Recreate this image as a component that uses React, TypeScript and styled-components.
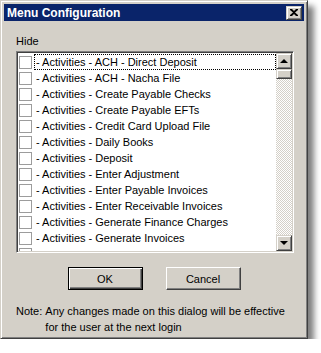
import { createGlobalStyle, styled } from 'styled-components';

const items = [
  '- Activities - ACH - Direct Deposit',
  '- Activities - ACH - Nacha File',
  '- Activities - Create Payable Checks',
  '- Activities - Create Payable EFTs',
  '- Activities - Credit Card Upload File',
  '- Activities - Daily Books',
  '- Activities - Deposit',
  '- Activities - Enter Adjustment',
  '- Activities - Enter Payable Invoices',
  '- Activities - Enter Receivable Invoices',
  '- Activities - Generate Finance Charges',
  '- Activities - Generate Invoices',
  '',
];

const App = () => {
  return (
    <>
      <GlobalStyle />
      <Dialog>
        <TitleBar>
          <Title>Menu Configuration</Title>
          <CloseButton>
            <svg width="8" height="7" viewBox="0 0 8 7">
              <path d="M0 0h2l2 2 2-2h2v1L5 3.5 8 6v1H6L4 5 2 7H0V6l3-2.5L0 1z" fill="#000" />
            </svg>
          </CloseButton>
        </TitleBar>
        <Body>
          <Label>Hide</Label>
          <ListBox>
            <Rows>
              {items.map((item, i) => (
                <Row key={i}>
                  <CheckBox />
                  <ItemText $focused={i === 0}>{item}</ItemText>
                </Row>
              ))}
            </Rows>
            <ScrollBar>
              <ScrollButton>
                <Arrow $up />
              </ScrollButton>
              <Thumb />
              <Track />
              <ScrollButton>
                <Arrow />
              </ScrollButton>
            </ScrollBar>
          </ListBox>
          <ButtonRow>
            <Button $default>OK</Button>
            <Button>Cancel</Button>
          </ButtonRow>
          <Note>
            <span>Note:&nbsp;</span>
            <span>Any changes made on this dialog will be effective for the user at the next login</span>
          </Note>
        </Body>
      </Dialog>
    </>
  );
};

export default App;

const GlobalStyle = createGlobalStyle`
  body {
    margin: 0;
    background: #fff;
    font-family: "Liberation Sans", Arial, sans-serif;
    font-size: 11px;
    color: #000;
  }
`;

const raised = `
  border: 1px solid;
  border-color: #d4d0c8 #404040 #404040 #d4d0c8;
  box-shadow: inset 1px 1px #fff, inset -1px -1px #808080;
`;

const Dialog = styled.div`
  box-sizing: border-box;
  width: 308px;
  height: 339px;
  padding: 3px;
  background: #d4d0c8;
  ${raised}
  box-shadow: inset 1px 1px #fff, inset -1px -1px #808080, 6px 6px 6px rgba(0, 0, 0, 0.5);
  display: flex;
  flex-direction: column;
`;

const TitleBar = styled.div`
  height: 18px;
  background: #0a246a;
  display: flex;
  align-items: center;
  justify-content: space-between;
  padding: 0 2px 0 3px;
`;

const Title = styled.span`
  color: #fff;
  font-weight: bold;
  font-size: 12px;
`;

const CloseButton = styled.div`
  box-sizing: border-box;
  width: 16px;
  height: 14px;
  background: #d4d0c8;
  ${raised}
  display: flex;
  align-items: center;
  justify-content: center;
`;

const Body = styled.div`
  padding: 14px 10px 0 12px;
  display: flex;
  flex-direction: column;
`;

const Label = styled.div`
  height: 13px;
  line-height: 13px;
  margin-bottom: 3px;
`;

const ListBox = styled.div`
  box-sizing: border-box;
  width: 278px;
  height: 202px;
  background: #fff;
  border: 1px solid;
  border-color: #808080 #fff #fff #808080;
  box-shadow: inset 1px 1px #404040, inset -1px -1px #d4d0c8;
  padding: 1px;
  display: flex;
  overflow: hidden;
`;

const Rows = styled.div`
  flex: 1;
  padding-top: 1px;
  overflow: hidden;
`;

const Row = styled.div`
  height: 16px;
  display: flex;
  align-items: center;
`;

const CheckBox = styled.div`
  box-sizing: border-box;
  width: 13px;
  height: 13px;
  margin: 0 2px 0 1px;
  border: 1px solid #9c9c9c;
  background: #fff;
  flex-shrink: 0;
`;

const ItemText = styled.div<{ $focused?: boolean }>`
  flex: 1;
  height: 16px;
  line-height: 17px;
  padding-left: 2px;
  white-space: nowrap;
  box-sizing: border-box;
  outline: ${(p) => (p.$focused ? '1px dotted #000' : 'none')};
  outline-offset: -1px;
`;

const ScrollBar = styled.div`
  width: 16px;
  display: flex;
  flex-direction: column;
`;

const ScrollButton = styled.div`
  box-sizing: border-box;
  width: 16px;
  height: 16px;
  background: #d4d0c8;
  ${raised}
  display: flex;
  align-items: center;
  justify-content: center;
`;

const Arrow = styled.div<{ $up?: boolean }>`
  width: 0;
  height: 0;
  border-left: 4px solid transparent;
  border-right: 4px solid transparent;
  ${(p) => (p.$up ? 'border-bottom: 4px solid #000;' : 'border-top: 4px solid #000;')}
`;

const Thumb = styled.div`
  box-sizing: border-box;
  height: 10px;
  background: #d4d0c8;
  ${raised}
`;

const Track = styled.div`
  flex: 1;
  background: repeating-conic-gradient(#d4d0c8 0 25%, #fff 0 50%) 0 0 / 2px 2px;
`;

const ButtonRow = styled.div`
  display: flex;
  justify-content: center;
  gap: 23px;
  margin-top: 14px;
  padding-right: 2px;
`;

const Button = styled.div<{ $default?: boolean }>`
  box-sizing: border-box;
  width: 75px;
  height: 23px;
  background: #d4d0c8;
  display: flex;
  align-items: center;
  justify-content: center;
  border: 1px solid;
  border-color: ${(p) => (p.$default ? '#000' : '#fff #404040 #404040 #fff')};
  box-shadow: ${(p) =>
    p.$default
      ? 'inset 1px 1px #fff, inset -1px -1px #404040, inset -2px -2px #808080'
      : 'inset -1px -1px #808080'};
`;

const Note = styled.div`
  display: flex;
  margin-top: 13px;
  line-height: 16px;
`;
